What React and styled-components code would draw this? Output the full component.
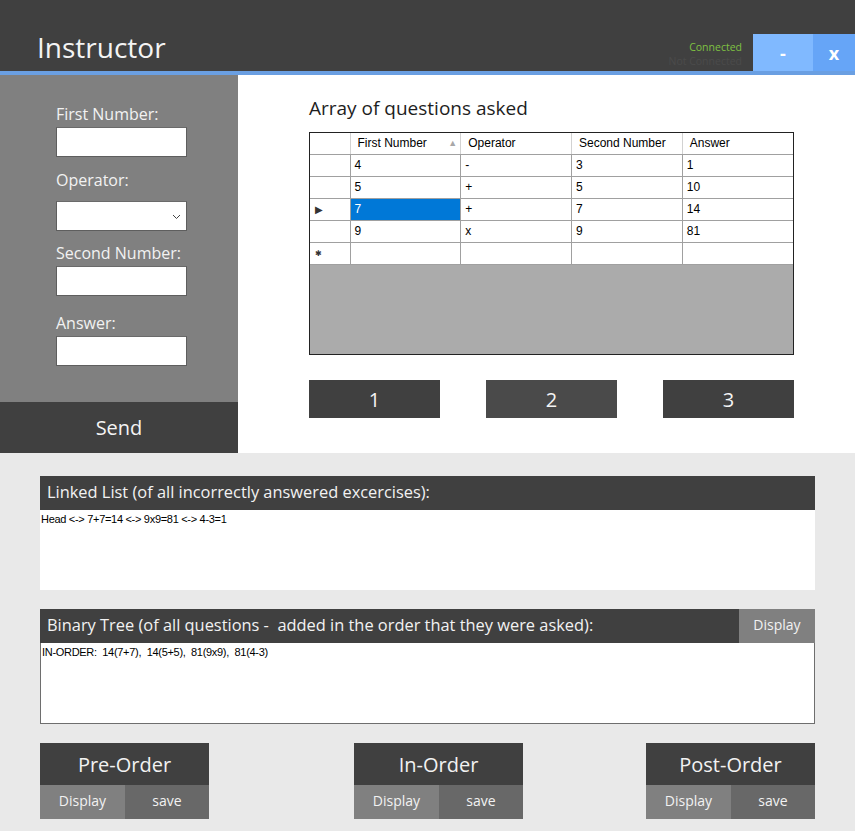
import React from 'react'
import styled, { createGlobalStyle } from 'styled-components'

const GlobalStyle = createGlobalStyle`
  html, body { margin: 0; padding: 0; background: #e9e9e9; }
  * { box-sizing: border-box; }
`

const gothic = `"Open Sans", "DejaVu Sans", sans-serif`
const winForms = `"Liberation Sans", Arial, sans-serif`

const Window = styled.div`
  width: 855px;
  height: 831px;
  display: flex;
  flex-direction: column;
  background: #e9e9e9;
  font-family: ${gothic};
  overflow: hidden;
`

const TitleBar = styled.header`
  height: 71px;
  background: #404040;
  display: flex;
  align-items: flex-end;
  border-bottom: 4px solid #6a9fe2;
  box-sizing: content-box;
`

const AppTitle = styled.h1`
  margin: 0 0 7px 37px;
  font-family: ${gothic};
  font-weight: 400;
  font-size: 28px;
  line-height: 34px;
  color: #f4f4f4;
  flex: 1;
`

const Status = styled.div`
  display: flex;
  flex-direction: column;
  align-items: flex-end;
  margin-right: 11px;
  margin-bottom: 3px;
  font-size: 10.5px;
  line-height: 14px;
`

const StatusText = styled.span`
  color: ${({ $on }) => ($on ? '#7fc142' : '#4b4b4b')};
`

const WinButton = styled.button`
  width: ${({ $w }) => $w}px;
  height: 37px;
  border: 0;
  padding: 0;
  background: ${({ $bg }) => $bg};
  color: #fff;
  font-family: ${gothic};
  font-weight: 700;
  font-size: 18px;
  cursor: pointer;
`

const Main = styled.div`
  display: grid;
  grid-template-columns: 238px 1fr;
  height: 378px;
`

const SidePanel = styled.aside`
  background: #808080;
  display: flex;
  flex-direction: column;
`

const Form = styled.div`
  flex: 1;
  padding: 29px 0 0 56px;
`

const Field = styled.div`
  margin-top: ${({ $top }) => $top}px;
  display: flex;
  flex-direction: column;
`

const Label = styled.label`
  font-size: 16px;
  line-height: 20px;
  color: #f2f2f2;
  margin-bottom: ${({ $gap }) => $gap}px;
`

const TextBox = styled.div`
  width: 131px;
  height: 30px;
  background: #fff;
  border: 1px solid #5e5e5e;
  border-top-color: #6a6a6a;
  position: relative;
`

const Chevron = styled.svg`
  position: absolute;
  right: 5px;
  top: 12px;
`

const SendBar = styled.button`
  height: 51px;
  border: 0;
  background: #404040;
  color: #f4f4f4;
  font-family: ${gothic};
  font-size: 20px;
  cursor: pointer;
`

const Content = styled.section`
  background: #fff;
  padding: 21px 61px 0 71px;
`

const SectionTitle = styled.h2`
  margin: 0;
  font-family: ${gothic};
  font-weight: 400;
  font-size: 19px;
  line-height: 24px;
  color: #1e1e1e;
`

const GridBox = styled.div`
  margin-top: 12px;
  height: 223px;
  border: 1px solid #222;
  background: #ababab;
`

const Grid = styled.table`
  border-collapse: collapse;
  width: 100%;
  font-family: ${winForms};
  font-size: 12px;
  color: #000;
  table-layout: fixed;
`

const Th = styled.th`
  height: 21px;
  background: #fff;
  font-weight: 400;
  text-align: left;
  padding: 0 0 0 7px;
  border-right: 1px solid #d2d2d2;
  border-bottom: 1px solid #a0a0a0;
  position: relative;
  &:last-child { border-right: 0; }
`

const SortArrow = styled.span`
  position: absolute;
  right: 3px;
  top: 5px;
  font-size: 9px;
  color: #a8a8a8;
`

const RowHead = styled.td`
  width: 40px;
  height: 22px;
  background: #fff;
  border-right: 1px solid #a0a0a0;
  border-bottom: 1px solid #a0a0a0;
  font-size: ${({ $small }) => ($small ? '8px' : '10px')};
  color: #333;
  padding-left: 5px;
`

const Td = styled.td`
  height: 22px;
  padding: 0 4px;
  background: ${({ $sel }) => ($sel ? '#0078d7' : '#fff')};
  color: ${({ $sel }) => ($sel ? '#fff' : '#000')};
  border-right: 1px solid #a0a0a0;
  border-bottom: 1px solid #a0a0a0;
  &:last-child { border-right: 0; }
`

const NumberRow = styled.div`
  margin-top: 25px;
  display: flex;
  justify-content: space-between;
`

const NumberButton = styled.button`
  width: 131px;
  height: 38px;
  border: 0;
  background: ${({ $light }) => ($light ? '#4a4a4a' : '#404040')};
  color: #f4f4f4;
  font-family: ${gothic};
  font-size: 20px;
  cursor: pointer;
`

const Lower = styled.div`
  padding: 23px 40px 0 40px;
  display: flex;
  flex-direction: column;
`

const Panel = styled.div`
  margin-top: ${({ $top }) => $top}px;
  display: flex;
  flex-direction: column;
`

const PanelHead = styled.div`
  height: 34px;
  background: #404040;
  display: flex;
  align-items: center;
`

const PanelTitle = styled.span`
  flex: 1;
  padding: 0 0 3px 7px;
  font-size: 16.4px;
  color: #f2f2f2;
  white-space: pre;
`

const SmallButton = styled.button`
  width: ${({ $w }) => $w || 76}px;
  height: ${({ $h }) => $h || 34}px;
  border: 0;
  padding: 0 0 3px;
  background: ${({ $bg }) => $bg || '#808080'};
  color: #f2f2f2;
  font-family: ${gothic};
  font-size: 14px;
  cursor: pointer;
`

const PanelBody = styled.div`
  height: ${({ $h }) => $h}px;
  background: #fff;
  border: ${({ $framed }) => ($framed ? '1px solid #6e6e6e' : '0')};
  border-top: 0;
  padding: 3px 0 0 1px;
  font-family: ${winForms};
  font-size: 11px;
  letter-spacing: -0.3px;
  color: #000;
  white-space: pre;
`

const Traversals = styled.div`
  margin-top: 19px;
  display: flex;
`

const Traversal = styled.div`
  width: 169px;
  margin-left: ${({ $left }) => ($left === 'auto' ? 'auto' : `${$left || 0}px`)};
  display: flex;
  flex-direction: column;
`

const TraversalTitle = styled.div`
  height: 42px;
  background: #404040;
  color: #f2f2f2;
  font-size: 20px;
  display: flex;
  align-items: center;
  justify-content: center;
`

const TraversalActions = styled.div`
  display: flex;
`

const rows = [
  ['4', '-', '3', '1'],
  ['5', '+', '5', '10'],
  ['7', '+', '7', '14'],
  ['9', 'x', '9', '81'],
]

function TraversalGroup({ title, left }) {
  return (
    <Traversal $left={left}>
      <TraversalTitle>{title}</TraversalTitle>
      <TraversalActions>
        <SmallButton $w={85} $bg="#808080">Display</SmallButton>
        <SmallButton $w={84} $bg="#686868">save</SmallButton>
      </TraversalActions>
    </Traversal>
  )
}

export default function App() {
  return (
    <Window>
      <GlobalStyle />
      <TitleBar>
        <AppTitle>Instructor</AppTitle>
        <Status>
          <StatusText $on>Connected</StatusText>
          <StatusText>Not Connected</StatusText>
        </Status>
        <WinButton $w={60} $bg="#80b9ff">-</WinButton>
        <WinButton $w={42} $bg="#66a5f7">x</WinButton>
      </TitleBar>

      <Main>
        <SidePanel>
          <Form>
            <Field $top={0}>
              <Label $gap={3}>First Number:</Label>
              <TextBox />
            </Field>
            <Field $top={13}>
              <Label $gap={11}>Operator:</Label>
              <TextBox>
                <Chevron width="9" height="6" viewBox="0 0 9 6">
                  <path d="M1 1l3.5 3.5L8 1" fill="none" stroke="#444" strokeWidth="1" />
                </Chevron>
              </TextBox>
            </Field>
            <Field $top={12}>
              <Label $gap={3}>Second Number:</Label>
              <TextBox />
            </Field>
            <Field $top={17}>
              <Label $gap={3}>Answer:</Label>
              <TextBox />
            </Field>
          </Form>
          <SendBar>Send</SendBar>
        </SidePanel>

        <Content>
          <SectionTitle>Array of questions asked</SectionTitle>
          <GridBox>
            <Grid>
              <thead>
                <tr>
                  <Th style={{ width: 40 }} />
                  <Th>
                    First Number<SortArrow>▲</SortArrow>
                  </Th>
                  <Th>Operator</Th>
                  <Th>Second Number</Th>
                  <Th>Answer</Th>
                </tr>
              </thead>
              <tbody>
                {rows.map((r, i) => (
                  <tr key={i}>
                    <RowHead>{i === 2 ? '▶' : ''}</RowHead>
                    {r.map((c, j) => (
                      <Td key={j} $sel={i === 2 && j === 0}>{c}</Td>
                    ))}
                  </tr>
                ))}
                <tr>
                  <RowHead $small>✱</RowHead>
                  <Td />
                  <Td />
                  <Td />
                  <Td />
                </tr>
              </tbody>
            </Grid>
          </GridBox>
          <NumberRow>
            <NumberButton>1</NumberButton>
            <NumberButton $light>2</NumberButton>
            <NumberButton>3</NumberButton>
          </NumberRow>
        </Content>
      </Main>

      <Lower>
        <Panel $top={0}>
          <PanelHead>
            <PanelTitle>Linked List (of all incorrectly answered excercises):</PanelTitle>
          </PanelHead>
          <PanelBody $h={80}>Head &lt;-&gt; 7+7=14 &lt;-&gt; 9x9=81 &lt;-&gt; 4-3=1</PanelBody>
        </Panel>

        <Panel $top={19}>
          <PanelHead>
            <PanelTitle>Binary Tree (of all questions -  added in the order that they were asked):</PanelTitle>
            <SmallButton>Display</SmallButton>
          </PanelHead>
          <PanelBody $h={81} $framed>{'IN-ORDER:  14(7+7),  14(5+5),  81(9x9),  81(4-3)'}</PanelBody>
        </Panel>

        <Traversals>
          <TraversalGroup title="Pre-Order" />
          <TraversalGroup title="In-Order" left={145} />
          <TraversalGroup title="Post-Order" left="auto" />
        </Traversals>
      </Lower>
    </Window>
  )
}
